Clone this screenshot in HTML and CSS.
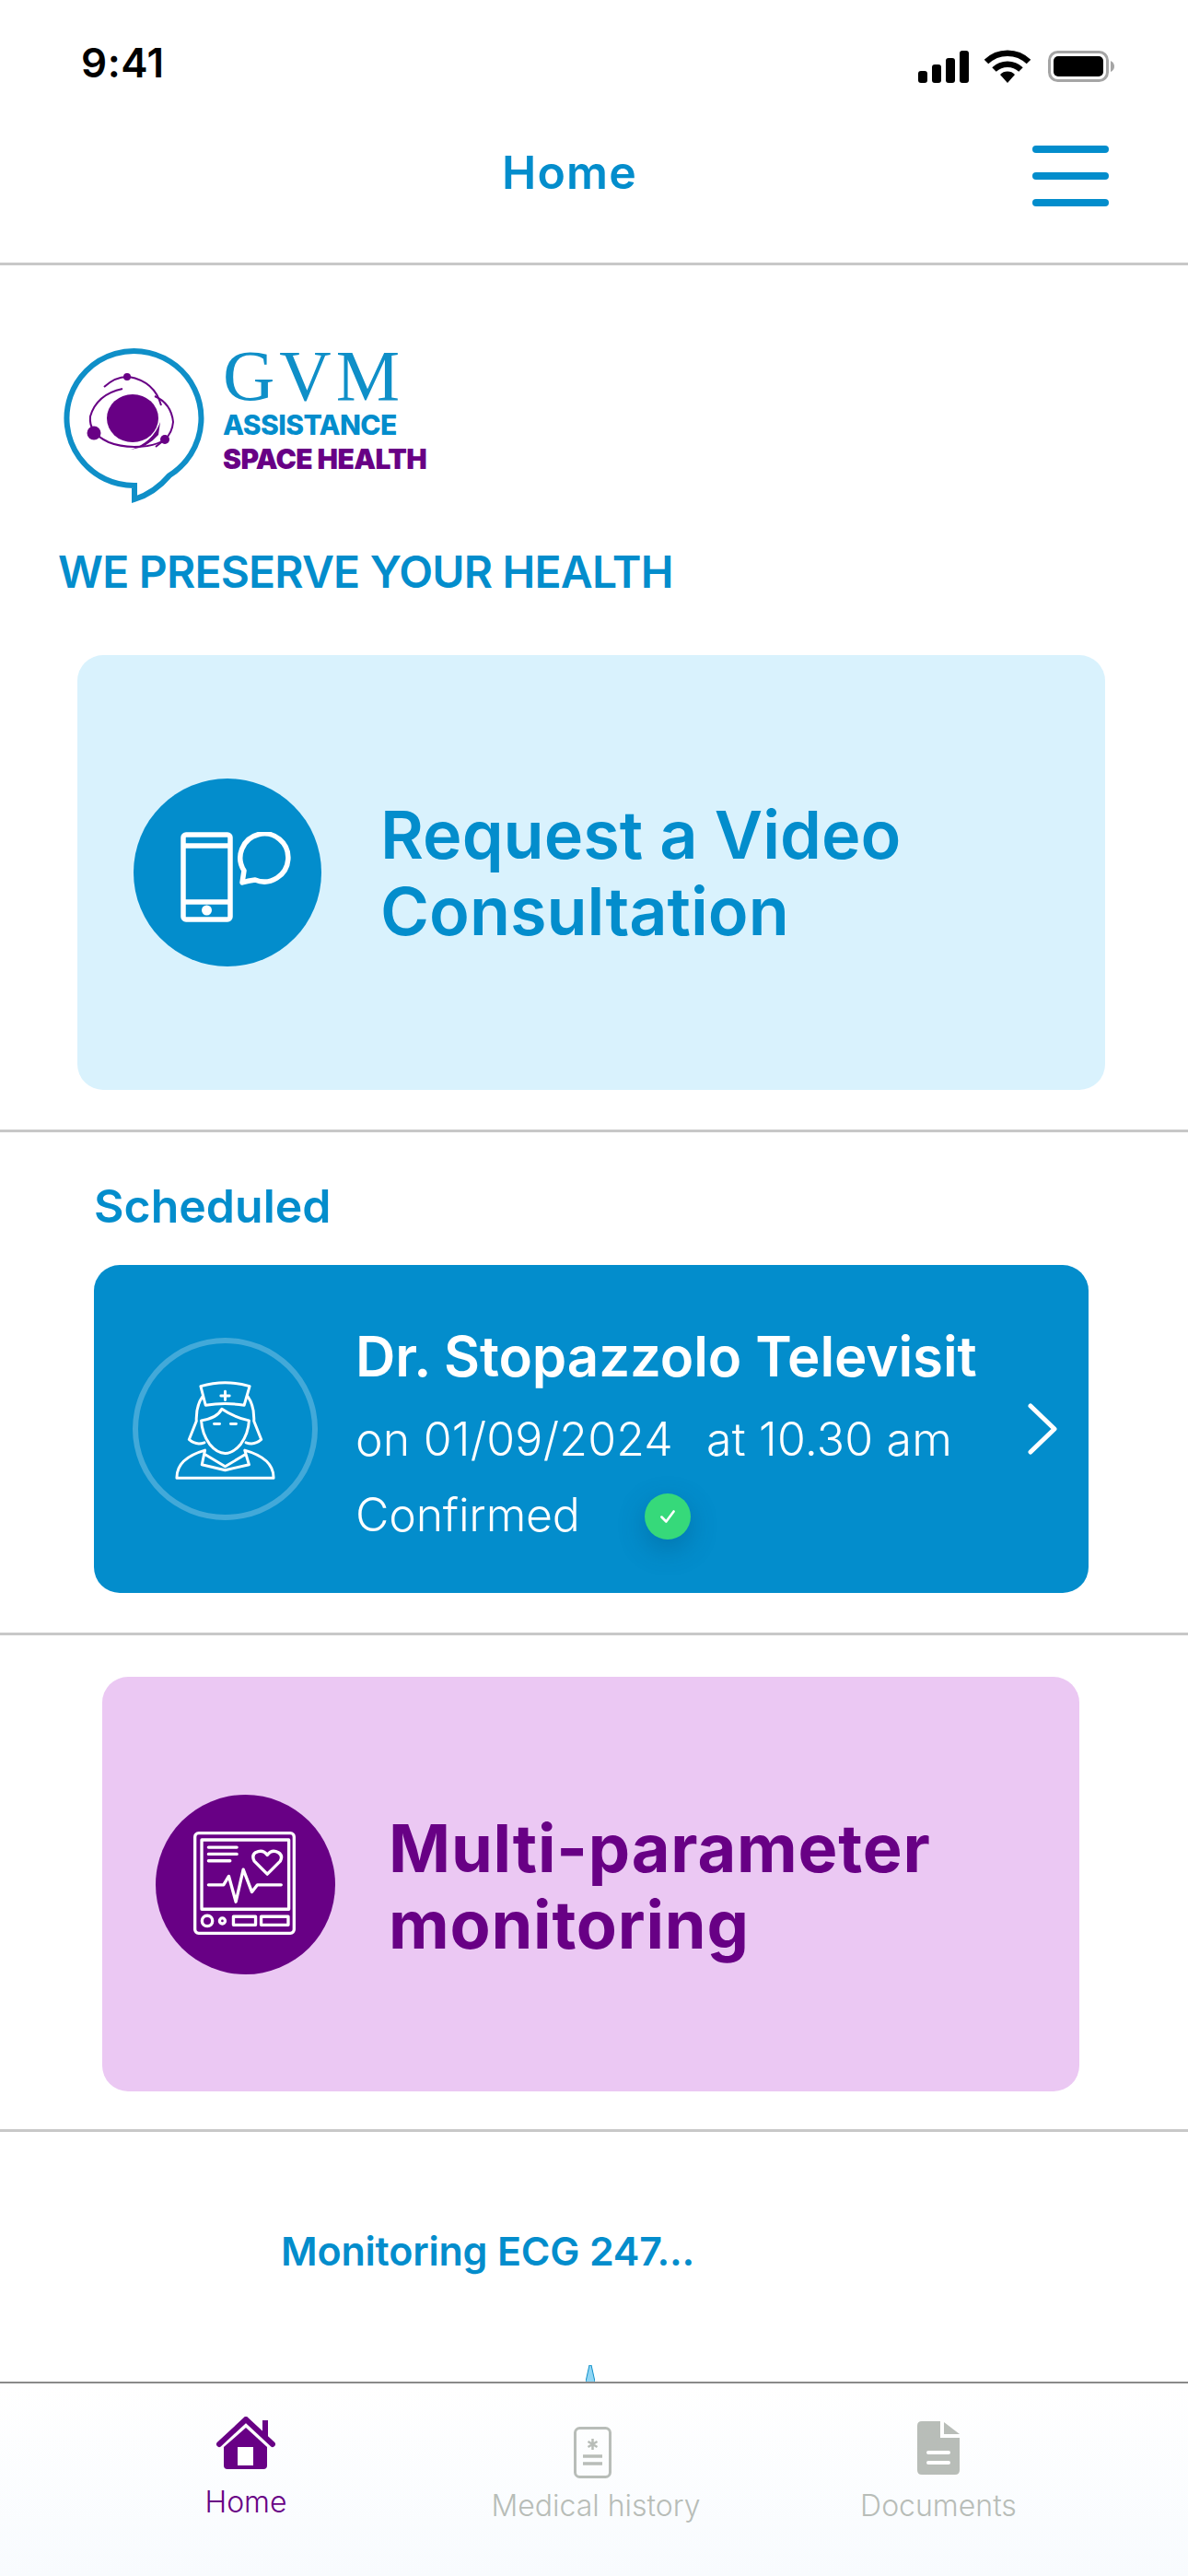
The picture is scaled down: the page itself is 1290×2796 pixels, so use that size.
FILE: index.html
```html
<!DOCTYPE html>
<html lang="en">
<head>
    <meta charset="UTF-8">
    <meta name="viewport" content="width=device-width, initial-scale=1.0">
    <title>Home</title>
    <link rel="stylesheet" href="styles.css">
</head>
<body>
<div class="page">
    <div class="status">
        <span class="time">9:41</span>
        <div class="status-icons">
            <svg class="signal" viewBox="0 0 56 35"><rect x="0" y="22" width="10" height="13" rx="3"/><rect x="15" y="15" width="10" height="20" rx="3"/><rect x="30" y="8" width="10" height="27" rx="3"/><rect x="45" y="0" width="10" height="35" rx="3"/></svg>
            <svg class="wifi" viewBox="0 0 52 36"><path d="M3 13A33 33 0 0 1 49 13" fill="none" stroke="#000" stroke-width="6.5"/><path d="M11.500 21.500A21 21 0 0 1 40.500 21.500" fill="none" stroke="#000" stroke-width="6.500"/><path d="M26 36L18 27A11 11 0 0 1 34 27Z"/></svg>
            <svg class="battery" viewBox="0 0 72 34"><rect x="1.500" y="1.500" width="63" height="31" rx="9" fill="#fff" stroke="#a5a5a5" stroke-width="3"/><rect x="6" y="6" width="54" height="22" rx="5"/><path d="M68 11Q72 13 72 17Q72 21 68 23Z" fill="#a5a5a5"/></svg>
        </div>
    </div>

    <header class="topbar">
        <h1>Home</h1>
        <div class="burger"><span></span><span></span><span></span></div>
    </header>

    <section class="intro">
        <div class="logo">
            <svg class="logo-mark" viewBox="66 375 160 175">
                <path d="M146 527A73 73 0 1 1 184 516Q168 535 146 542Z" fill="#fff" stroke="#0f8fc8" stroke-width="6"/>
                <ellipse cx="144" cy="454" rx="28" ry="26" fill="#680085"/>
                <g fill="none" stroke="#680085" stroke-width="2">
                    <path d="M113 420Q126 408 140 409Q168 414 175 440"/>
                    <path d="M133 422Q105 428 98 452Q96 470 118 480Q135 487 160 484Q172 482 179 477"/>
                    <path d="M168 430Q186 438 188 458Q187 470 179 477L169 485"/>
                </g>
                <path d="M174 458Q166 480 142 488Q160 486 172 472Z" fill="#680085"/>
                <circle cx="138" cy="409" r="4" fill="#680085"/>
                <circle cx="102" cy="470" r="7.500" fill="#680085"/>
                <circle cx="179" cy="477" r="5" fill="#680085"/>
            </svg>
            <div class="logo-text">
                <span class="logo-gvm">GVM</span>
                <span class="logo-assist">ASSISTANCE</span>
                <span class="logo-space">SPACE HEALTH</span>
            </div>
        </div>
        <p class="tagline">WE PRESERVE YOUR HEALTH</p>
        <div class="card card-video">
            <div class="disc disc-blue">
                <svg class="icon-phone" viewBox="0 0 124 98" fill="none" stroke="#fff" stroke-width="5.500">
                    <rect x="3" y="3" width="51" height="92" rx="3"/>
                    <path d="M3 15H54M3 76H54"/>
                    <circle cx="28.500" cy="85" r="5.500" fill="#fff" stroke="none"/>
                    <path d="M67 55L69 42A26 26 0 1 1 81 52Q73 53 67 55Z" stroke-linejoin="round"/>
                </svg>
            </div>
            <h2>Request a Video<br>Consultation</h2>
        </div>
    </section>

    <section class="scheduled">
        <h3>Scheduled</h3>
        <div class="visit">
            <div class="ring">
                <svg class="icon-nurse" viewBox="270 296 332 328" fill="none" stroke="#fff" stroke-width="9" stroke-linejoin="round" stroke-linecap="round">
                    <path d="M356 316Q436 292 516 316L498 378Q436 368 372 378Z"/>
                    <path d="M436 333V361M422 347H450"/>
                    <path d="M362 350Q340 380 342 430L318 490Q340 510 368 500"/>
                    <path d="M510 350Q532 380 530 430L554 490Q532 510 504 500"/>
                    <path d="M358 428Q360 470 385 505Q410 535 436 535Q462 535 487 505Q512 470 514 428Q470 420 425 390Q410 420 358 428Z"/>
                    <path d="M400 439H418M454 439H472"/>
                    <path d="M278 616Q276 552 370 525L360 572L436 590L514 572L500 525Q596 552 594 616Z"/>
                    <path d="M372 540L436 578L500 540"/>
                </svg>
            </div>
            <div class="visit-text">
                <div class="visit-title">Dr. Stopazzolo Televisit</div>
                <div class="visit-when"><span>on 01/09/2024</span><span>at 10.30 am</span></div>
                <div class="visit-state">
                    <span>Confirmed</span>
                    <span class="tick"><svg viewBox="0 0 20 20" fill="none" stroke="#fff" stroke-width="2.400" stroke-linecap="round" stroke-linejoin="round"><path d="M4 10.500L8.500 15L16 5"/></svg></span>
                </div>
            </div>
            <svg class="chevron" viewBox="0 0 32 56" fill="none" stroke="#fff" stroke-width="5" stroke-linecap="round" stroke-linejoin="round"><path d="M3 3L29 28L3 53"/></svg>
        </div>
    </section>

    <section class="monitoring">
        <div class="card card-multi">
            <div class="disc disc-purple">
                <svg class="icon-monitor" viewBox="180 262 332 335" fill="none" stroke="#fff" stroke-width="10" stroke-linecap="round" stroke-linejoin="round">
                    <rect x="185" y="267" width="322" height="325" rx="12"/>
                    <rect x="207" y="289" width="283" height="225"/>
                    <path d="M229 313H321M229 335H321M229 357H299"/>
                    <path d="M420 400L378 358Q368 340 382 330Q405 318 420 338Q435 318 456 330Q472 340 462 358Z"/>
                    <path d="M229 435H278L295 407L318 490L342 385L370 458L388 435H465"/>
                    <circle cx="225" cy="552" r="17"/>
                    <circle cx="274" cy="552" r="9"/>
                    <rect x="310" y="538" width="72" height="27"/>
                    <rect x="400" y="538" width="88" height="27"/>
                </svg>
            </div>
            <h2>Multi-parameter<br>monitoring</h2>
        </div>
    </section>

    <section class="ecg">
        <p class="ecg-title">Monitoring ECG 247...</p>
        <svg class="ecg-spike" viewBox="0 0 10 18"><path d="M0 18L4 0H6L10 18" fill="#8fd6f5" stroke="#0f8fc8" stroke-width="1"/></svg>
    </section>

    <nav class="tabs">
        <div class="tab tab-home">
            <svg class="icon-home" viewBox="0 0 64 57">
                <path d="M50 4H56V22H50Z" fill="#680085"/>
                <path d="M3 30L32 3L61 30" fill="none" stroke="#680085" stroke-width="6" stroke-linecap="round"/>
                <path d="M8 33L32 12L55 33V53Q55 57 51 57H12Q8 57 8 53Z" fill="#680085"/>
                <rect x="23" y="33" width="17" height="20" fill="#fff"/>
            </svg>
            <span>Home</span>
        </div>
        <div class="tab tab-history">
            <svg class="icon-history" viewBox="0 0 41 56" fill="none" stroke="#b8bdb8">
                <rect x="1.500" y="1.500" width="38" height="53" rx="5" stroke-width="3"/>
                <path d="M20.500 13V25M15.500 16L25.500 22M25.500 16L15.500 22" stroke-width="2.500"/>
                <path d="M10 32H31M10 40H31" stroke-width="3.500"/>
            </svg>
            <span>Medical history</span>
        </div>
        <div class="tab tab-docs">
            <svg class="icon-docs" viewBox="0 0 46 58">
                <path d="M5 0H25V18H46V53Q46 58 41 58H5Q0 58 0 53V5Q0 0 5 0Z" fill="#b8bdb8"/>
                <path d="M29 1L46 14H29Z" fill="#b8bdb8"/>
                <path d="M12 34H34M12 45H34" stroke="#fff" stroke-width="4" stroke-linecap="round"/>
            </svg>
            <span>Documents</span>
        </div>
    </nav>
</div>
</body>
</html>
```

FILE: styles.css
```css
* {
    box-sizing: border-box;
}
body {
    margin: 0;
    background: #fff;
    font-family: Inter, "Open Sans", sans-serif;
    color: #038dcc;
}
h1, h2, h3, p {
    margin: 0;
}
.page {
    width: 1290px;
    height: 2796px;
    overflow: hidden;
    display: flex;
    flex-direction: column;
}

/* status bar */
.status {
    height: 96px;
    padding: 40px 80px 0 88px;
    display: flex;
    justify-content: space-between;
    align-items: center;
    color: #000;
}
.time {
    font-size: 44px;
    font-weight: 600;
    letter-spacing: 0.5px;
}
.status-icons {
    display: flex;
    align-items: center;
    gap: 15px;
    margin-top: 8px;
}
.signal {
    width: 56px;
    height: 35px;
}
.wifi {
    width: 52px;
    height: 36px;
}
.battery {
    width: 72px;
    height: 34px;
    margin-left: 3px;
}

/* top bar */
.topbar {
    height: 192px;
    padding: 0 86px 0 545px;
    border-bottom: 3px solid #c8c8c8;
    display: flex;
    justify-content: space-between;
    align-items: center;
}
.topbar h1 {
    font-size: 50px;
    font-weight: 600;
    letter-spacing: 1.2px;
    margin-top: -8px;
}
.burger {
    width: 83px;
    display: flex;
    flex-direction: column;
    gap: 21px;
}
.burger span {
    height: 8px;
    border-radius: 4px;
    background: #038dcc;
}

/* logo and first card */
.intro {
    height: 941px;
    padding-top: 87px;
    border-bottom: 3px solid #c8c8c8;
}
.logo {
    display: flex;
    padding-left: 66px;
    gap: 16px;
}
.logo-mark {
    width: 160px;
    height: 175px;
}
.logo-text {
    display: flex;
    flex-direction: column;
    margin-top: -3px;
}
.logo-gvm {
    font-family: "Liberation Serif", serif;
    font-size: 78px;
    line-height: 71px;
    letter-spacing: 5px;
    color: #0f8fc8;
}
.logo-assist {
    font-family: Inter, sans-serif;
    font-size: 30px;
    line-height: 36px;
    font-weight: 800;
    letter-spacing: -0.6px;
    color: #038dcc;
}
.logo-space {
    font-family: Inter, sans-serif;
    font-size: 30px;
    line-height: 38px;
    font-weight: 900;
    letter-spacing: -0.6px;
    color: #680085;
}
.tagline {
    margin-top: 41px;
    padding-left: 63px;
    font-size: 48px;
    line-height: 60px;
    font-weight: 600;
    letter-spacing: -0.8px;
    white-space: nowrap;
}
.card {
    display: flex;
    align-items: center;
}
.card h2 {
    font-size: 72px;
    line-height: 83px;
    font-weight: 600;
}
.card-video {
    width: 1116px;
    height: 472px;
    margin: 60px 0 0 84px;
    padding: 0 0 0 61px;
    gap: 64px;
    border-radius: 28px;
    background: #d9f2fd;
}
.disc {
    flex: none;
    display: flex;
    border-radius: 50%;
}
.disc-blue {
    width: 204px;
    height: 204px;
    background: #038dcc;
    padding: 58px 0 0 51px;
}
.icon-phone {
    width: 124px;
    height: 98px;
}

/* scheduled */
.scheduled {
    height: 546px;
    padding-top: 47px;
    border-bottom: 3px solid #c8c8c8;
}
.scheduled h3 {
    margin-left: 102px;
    font-size: 50px;
    line-height: 66px;
    font-weight: 600;
}
.visit {
    width: 1080px;
    height: 356px;
    margin: 31px 0 0 102px;
    padding: 0 34px 0 42px;
    display: flex;
    align-items: center;
    border-radius: 28px;
    background: #038dcc;
    color: #fff;
}
.ring {
    flex: none;
    width: 201px;
    height: 198px;
    border: 6px solid rgba(255, 255, 255, 0.25);
    border-radius: 50%;
    display: flex;
    align-items: center;
    justify-content: center;
}
.icon-nurse {
    width: 111px;
    height: 109px;
    margin-top: 3px;
}
.visit-text {
    flex: 1;
    margin-left: 41px;
    padding-top: 11px;
}
.visit-title {
    font-size: 60px;
    line-height: 76px;
    font-weight: 600;
    letter-spacing: -0.1px;
    white-space: nowrap;
}
.visit-when {
    display: flex;
    gap: 36px;
    margin-top: 16px;
    font-size: 50px;
    line-height: 72px;
    font-weight: 300;
    letter-spacing: 0.2px;
}
.visit-state {
    display: flex;
    align-items: center;
    gap: 70px;
    margin-top: 10px;
    font-size: 50px;
    line-height: 72px;
    font-weight: 300;
    letter-spacing: -0.2px;
}
.tick {
    width: 50px;
    height: 50px;
    margin-top: 5px;
    padding: 14px;
    display: flex;
    border-radius: 50%;
    background: #36d97a;
    box-shadow: 0 10px 30px rgba(0, 60, 100, 0.3);
}
.chevron {
    flex: none;
    width: 32px;
    height: 56px;
}

/* multi-parameter card */
.monitoring {
    height: 539px;
    padding-top: 45px;
    border-bottom: 3px solid #c8c8c8;
}
.card-multi {
    width: 1061px;
    height: 450px;
    margin-left: 111px;
    padding-left: 58px;
    gap: 58px;
    border-radius: 28px;
    background: #ebc8f3;
    color: #680085;
}
.card-multi h2 {
    font-weight: 700;
    letter-spacing: 0.8px;
    margin-top: 4px;
}
.disc-purple {
    width: 195px;
    height: 195px;
    background: #680085;
    padding: 40px 0 0 41px;
}
.icon-monitor {
    width: 111px;
    height: 112px;
}

/* ecg */
.ecg {
    height: 271px;
    display: flex;
    flex-direction: column;
}
.ecg-title {
    margin: 99px 0 0 305px;
    font-size: 43px;
    line-height: 60px;
    font-weight: 600;
    letter-spacing: -0.2px;
}
.ecg-spike {
    width: 10px;
    height: 18px;
    margin: auto 0 0 636px;
    display: block;
}

/* tab bar */
.tabs {
    flex: 1;
    padding-left: 77px;
    border-top: 2px solid #8a8a8a;
    display: grid;
    grid-template-columns: 380px 380px 364px;
    background: linear-gradient(#fff, #f8fbfe);
    color: #b8bdb8;
    font-size: 32px;
    font-weight: 300;
}
.tab {
    display: flex;
    flex-direction: column;
    align-items: center;
}
.tab-home {
    padding-top: 36px;
    gap: 16px;
    color: #680085;
}
.tab-history {
    padding-top: 47px;
    gap: 10px;
}
.tab-docs {
    padding-top: 41px;
    gap: 14px;
}
.icon-home {
    width: 64px;
    height: 57px;
}
.icon-history {
    width: 41px;
    height: 56px;
    margin-right: 8px;
}
.icon-docs {
    width: 46px;
    height: 58px;
}
```
